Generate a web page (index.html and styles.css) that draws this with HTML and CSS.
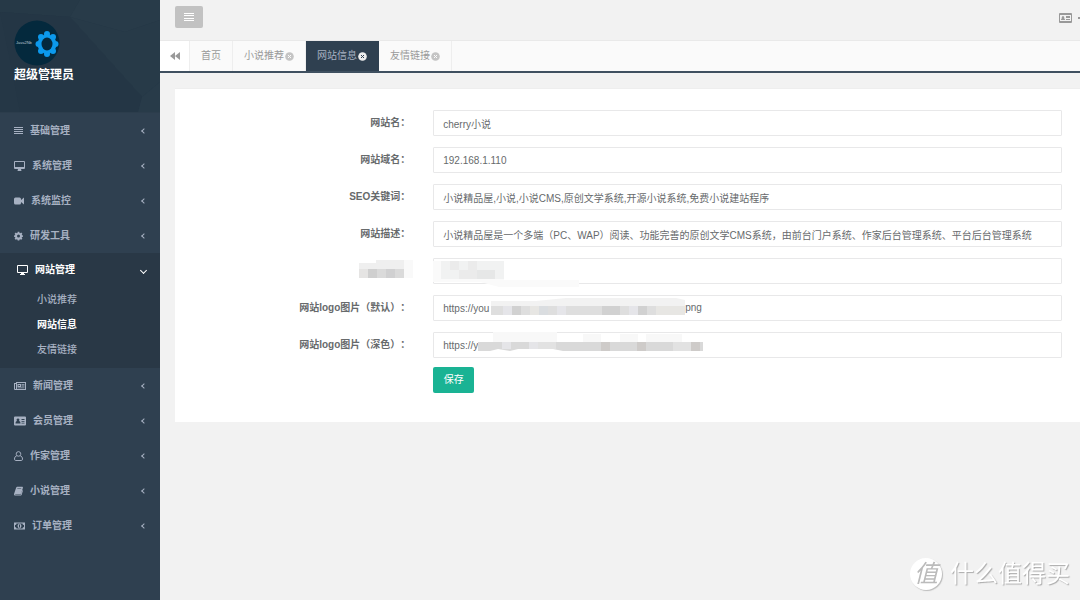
FILE: index.html
```html
<!DOCTYPE html>
<html lang="zh-CN">
<head>
<meta charset="utf-8">
<title>网站信息</title>
<link rel="stylesheet" href="styles.css">
</head>
<body>
<div class="layout">
  <nav class="sidebar">
    <header class="profile">
      <svg class="profile-pattern" viewBox="0 0 160 112" preserveAspectRatio="none" aria-hidden="true">
        <path d="M0 0H160V112H0Z" fill="#253746"/>
        <path d="M0 0H80L70 17L0 12Z" fill="#263947"/>
        <path d="M80 0H160V20L125 32L70 17Z" fill="#283b49"/>
        <path d="M70 17L125 32L160 20V82L142 97Z" fill="#273a48"/>
        <path d="M0 12L70 17L142 97L138 112H20L10 60Z" fill="#243645"/>
        <path d="M142 97L160 82V112H138Z" fill="#283b49"/>
      </svg>
      <svg class="avatar" viewBox="0 0 46 46" role="img" aria-label="头像">
        <circle cx="23" cy="23" r="22.500" fill="#04293d"/>
        <text x="2" y="24" class="avatar-text">Java2Nb</text>
        <g fill="#0c99ec">
          <circle cx="33" cy="24" r="9.500"/>
          <circle cx="33" cy="14" r="3"/><circle cx="39" cy="17" r="3"/><circle cx="41.500" cy="24" r="3"/><circle cx="39" cy="31" r="3"/>
          <circle cx="33" cy="34" r="3"/><circle cx="27" cy="31" r="3"/><circle cx="24.500" cy="24" r="3"/><circle cx="27" cy="17" r="3"/>
        </g>
        <ellipse cx="33" cy="24" rx="5.500" ry="6.500" fill="#04293d"/>
      </svg>
      <strong class="profile-name">超级管理员</strong>
    </header>
    <ul class="menu">
      <li><a class="menu-link" href="#"><svg width="9" height="10" viewBox="0 0 9 10"><path d="M0 1h9v1H0zM0 3h9v1H0zM0 5h9v1H0zM0 7h9v1H0z"/></svg>基础管理<i class="arrow"></i></a></li>
      <li><a class="menu-link" href="#"><svg width="11" height="10" viewBox="0 0 11 10"><path fill-rule="evenodd" d="M1 0h9a1 1 0 0 1 1 1v6a1 1 0 0 1-1 1H7l.5 2h-4L4 8H1a1 1 0 0 1-1-1V1a1 1 0 0 1 1-1zm0 1v5h9V1z"/></svg>系统管理<i class="arrow"></i></a></li>
      <li><a class="menu-link" href="#"><svg width="10" height="10" viewBox="0 0 10 10"><path d="M1.500 1.500h4A1.500 1.500 0 0 1 7 3v1l3-2.500v7L7 6v1a1.500 1.500 0 0 1-1.500 1.500h-4A1.500 1.500 0 0 1 0 7V3a1.500 1.500 0 0 1 1.500-1.500z"/></svg>系统监控<i class="arrow"></i></a></li>
      <li><a class="menu-link" href="#"><svg width="9" height="10" viewBox="0 0 9 10"><path fill-rule="evenodd" d="M3.700.7h1.600l.3 1.200.6.300 1-.7 1.200 1.200-.7 1 .3.600 1 .2v1.300l-1 .2-.3.700.7 1-1.200 1.100-1-.6-.6.200-.3 1.200H3.700l-.3-1.200-.6-.2-1 .6L.6 7.700l.7-1-.3-.7-1-.2V4.500l1-.2.300-.6-.7-1L1.800 1.500l1 .7.600-.3zM4.500 3.500a1.500 1.500 0 1 0 0 3 1.500 1.500 0 0 0 0-3z"/></svg>研发工具<i class="arrow"></i></a></li>
      <li class="menu-group">
        <a class="menu-link" href="#"><svg width="11" height="10" viewBox="0 0 11 10"><path fill-rule="evenodd" d="M1 0h9a1 1 0 0 1 1 1v6a1 1 0 0 1-1 1H7v1h1v1H3V9h1V8H1a1 1 0 0 1-1-1V1a1 1 0 0 1 1-1zm0 1v6h9V1z"/></svg>网站管理<i class="arrow arrow-down"></i></a>
        <ul class="submenu">
          <li><a href="#">小说推荐</a></li>
          <li><a class="current" href="#">网站信息</a></li>
          <li><a href="#">友情链接</a></li>
        </ul>
      </li>
      <li><a class="menu-link" href="#"><svg width="12" height="10" viewBox="0 0 12 10"><path fill-rule="evenodd" d="M2 1h10v8H1a1 1 0 0 1-1-1V2h2zM1 3v5h1V3zm2-1v6h8V2zM3.500 3H7v3H3.500zM4.500 4v1H6V4zM7.500 3h3v.8h-3zM7.500 4.600h3v.8h-3zM3.500 6.500h7v.8h-7z"/></svg>新闻管理<i class="arrow"></i></a></li>
      <li><a class="menu-link" href="#"><svg width="12" height="10" viewBox="0 0 12 10"><path fill-rule="evenodd" d="M1 .5h10a1 1 0 0 1 1 1v7a1 1 0 0 1-1 1H1a1 1 0 0 1-1-1v-7a1 1 0 0 1 1-1zM4 2.500a1.400 1.400 0 0 0-1 2.400C2 5.200 1.500 6 1.500 7.500h5C6.500 6 6 5.200 5 4.900a1.400 1.400 0 0 0-1-2.400zM7.500 3v1h3V3zm0 2v.8h3V5zm0 1.700v.8h3v-.8z"/></svg>会员管理<i class="arrow"></i></a></li>
      <li><a class="menu-link" href="#"><svg width="9" height="10" viewBox="0 0 9 10"><path class="line" d="M4.500.6a2.300 2.300 0 0 0-1.500 4C1.300 5 .5 6.500.5 8.200c0 .8.500 1.300 1.200 1.300h5.600c.7 0 1.200-.5 1.200-1.300C8.500 6.500 7.700 5 6 4.600a2.300 2.300 0 0 0-1.500-4zM3 4.600c1 .8 2 .8 3 0"/></svg>作家管理<i class="arrow"></i></a></li>
      <li><a class="menu-link" href="#"><svg width="9" height="10" viewBox="0 0 9 10"><path fill-rule="evenodd" d="M3 .8h5.500L9 1.500 7.200 7.600l-.7.400H1.400c-.5.200-.3.600.1.600h5.400L8.500 4 9 4.500 7.600 9l-.7.500H1.300C.3 9.500-.2 8.500.1 7.700L2.200 1.400zM3.400 2.400l-.2.700h3.900l.2-.7z"/></svg>小说管理<i class="arrow"></i></a></li>
      <li><a class="menu-link" href="#"><svg width="11" height="10" viewBox="0 0 11 10"><path fill-rule="evenodd" d="M0 1.500h11v7H0zM2.500 2.500A1.500 1.500 0 0 1 1 4v2a1.500 1.500 0 0 1 1.500 1.500h6A1.500 1.500 0 0 1 10 6V4a1.500 1.500 0 0 1-1.500-1.500zM5.500 2.800c1.200 0 1.900 1 1.900 2.200S6.700 7.200 5.500 7.200 3.600 6.200 3.600 5s.7-2.200 1.900-2.200zM5 3.600v2.800h1V3.600z"/></svg>订单管理<i class="arrow"></i></a></li>
    </ul>
  </nav>

  <main class="main">
    <div class="topbar">
      <button class="toggle" type="button" aria-label="折叠菜单"><svg width="10" height="10" viewBox="0 0 10 10"><path d="M0 1h10v1H0zM0 3h10v1H0zM0 6h10v1H0zM0 8h10v1H0z"/></svg></button>
      <a class="notice" href="#" aria-label="消息">
        <svg width="13" height="10" viewBox="0 0 13 10"><path fill-rule="evenodd" d="M1 0h11a1 1 0 0 1 1 1v8a1 1 0 0 1-1 1H1a1 1 0 0 1-1-1V1a1 1 0 0 1 1-1zm0 2v6h11V2z"/><path d="M2 7c0-1 .5-1.600 1-1.800a1.300 1.300 0 1 1 2 0C5.700 5.400 6 6 6 7zM7 3h4v2H7zM7 6h4v1H7z"/></svg>
        <i class="caret"></i>
      </a>
    </div>
    <div class="tabs">
      <button class="tabs-scroll" type="button" aria-label="向左"><svg width="10" height="8" viewBox="0 0 10 8"><path d="M5 0v8L0 4zM10 0v8L5 4z"/></svg></button>
      <a class="tab" href="#">首页</a>
      <a class="tab" href="#">小说推荐<svg width="9" height="9" viewBox="0 0 9 9"><circle cx="4.500" cy="4.500" r="4.300"/><path d="M3 3l3 3M6 3L3 6"/></svg></a>
      <a class="tab active" href="#">网站信息<svg width="9" height="9" viewBox="0 0 9 9"><circle cx="4.500" cy="4.500" r="4.300"/><path d="M3 3l3 3M6 3L3 6"/></svg></a>
      <a class="tab" href="#">友情链接<svg width="9" height="9" viewBox="0 0 9 9"><circle cx="4.500" cy="4.500" r="4.300"/><path d="M3 3l3 3M6 3L3 6"/></svg></a>
    </div>

    <form class="card">
      <div class="row"><label for="name">网站名：</label><div class="field"><input id="name" type="text" value="cherry小说"></div></div>
      <div class="row"><label for="domain">网站域名：</label><div class="field"><input id="domain" type="text" value="192.168.1.110"></div></div>
      <div class="row"><label for="seo">SEO关键词：</label><div class="field"><input id="seo" type="text" value="小说精品屋,小说,小说CMS,原创文学系统,开源小说系统,免费小说建站程序"></div></div>
      <div class="row"><label for="desc">网站描述：</label><div class="field"><input id="desc" type="text" value="小说精品屋是一个多端（PC、WAP）阅读、功能完善的原创文学CMS系统，由前台门户系统、作家后台管理系统、平台后台管理系统"></div></div>
      <div class="row">
        <label for="masked"><svg class="mask-label" width="51" height="18" viewBox="0 0 51 18" role="img" aria-label="已遮挡"><path fill="#efefef" d="M0 3h17V0h28v9H0z"/><path fill="#f9f9f9" d="M45 0h9v18h-9z"/><path fill="#e5e4e3" d="M0 9h9v9H0z"/><path fill="#cfcfcf" d="M9 9h9v9H9z"/><path fill="#dadada" d="M18 9h9v9h-9zM36 9h9v9h-9z"/><path fill="#d0d0d1" d="M27 9h9v9h-9z"/></svg></label>
        <div class="field"><input id="masked" type="text">
          <div class="mask mask-start"><svg width="146" height="26" viewBox="0 0 146 26" aria-hidden="true"><path fill="#fafafa" d="M0 3h71v21H0zM40 22h106v7H66z"/><path fill="#f1f2f2" d="M8 3h63v18H8z"/><path fill="#ebebeb" d="M17 3h9v9h-9zM35 3h9v9h-9zM26 12h18v9H26z"/><path fill="#e6e7e7" d="M44 12h18v9H44z"/></svg></div>
        </div>
      </div>
      <div class="row"><label for="logo">网站logo图片（默认）：</label><div class="field"><input id="logo" type="text" value="https://you">
        <div class="mask"><svg width="194" height="20" viewBox="0 0 194 20" aria-hidden="true"><path fill="#f2f2f2" d="M0 5h45L75 2h110l9 2v8H0z"/><path fill="#dedede" d="M0 10h194v9H0z"/><path fill="#e5e5e9" d="M12 10h9v9h-9zM66 10h9v9h-9zM138 10h9v9h-9z"/><path fill="#d1d1d1" d="M21 10h9v9h-9zM111 10h18v9h-18zM147 10h9v9h-9z"/><path fill="#dadde0" d="M48 10h9v9h-9z"/><path fill="#e7e6e3" d="M39 10h9v9h-9zM165 10h29v9h-29z"/></svg><span>png</span></div>
      </div></div>
      <div class="row"><label for="logo-dark">网站logo图片（深色）：</label><div class="field"><input id="logo-dark" type="text" value="https://y">
        <div class="mask mask-dark"><svg width="225" height="20" viewBox="0 0 225 20" aria-hidden="true"><path fill="#f8f8f8" d="M15 0h64v10H15zM105 2h18v8h-18zM142 2h18v8h-18zM168 2h36v8h-36z"/><path fill="#d9d9d9" d="M0 10h225v9H85l-10-2H40l-8 2-12-2-8 2H0z"/><path fill="#e5e5e8" d="M24 10h9v7h-9zM51 10h9v7h-9z"/><path fill="#cecbc9" d="M123 10h9v9h-9zM159 10h9v9h-9zM213 10h9v9h-9z"/><path fill="#e2e2e2" d="M60 10h18v7H60zM195 10h18v9h-18z"/></svg></div>
      </div></div>
      <div class="row actions"><button class="save" type="submit">保存</button></div>
    </form>
  </main>
</div>
<div class="watermark"><span class="watermark-badge">值</span><span>什么值得买</span></div>
</body>
</html>
```

FILE: styles.css
```css
* { box-sizing: border-box; }

body {
  margin: 0;
  background: #f2f2f2;
  color: #676a6c;
  font: 10px/16px "Liberation Sans", "Noto Sans CJK SC", sans-serif;
  text-spacing-trim: space-all;
}

a { color: inherit; text-decoration: none; }
ul { margin: 0; padding: 0; list-style: none; }
svg { flex: none; fill: currentColor; }
button, input { font: inherit; }

.layout { display: flex; min-height: 100vh; }

/* Sidebar */
.sidebar { flex: none; width: 160px; background: #2f4050; color: #a7b1c2; }

.profile {
  position: relative;
  display: flex;
  flex-direction: column;
  align-items: flex-start;
  height: 113px;
  padding: 20px 14px;
  border-bottom: 1px solid #2c3d4c;
}
.profile-pattern { position: absolute; inset: 0; width: 100%; height: 100%; }
.avatar { position: relative; width: 46px; height: 46px; }
.avatar-text { fill: #b9c6cf; font-size: 4px; }
.profile-name { position: relative; color: #fff; font-size: 12px; line-height: 18px; }

.menu-link {
  display: flex;
  align-items: center;
  gap: 7px;
  height: 35px;
  padding: 0 14px;
  font-weight: bold;
}
.line { fill: none; stroke: currentColor; }

.arrow {
  width: 4px;
  height: 4px;
  margin-left: auto;
  border: solid currentColor;
  border-width: 0 0 1px 1px;
  transform: rotate(45deg);
}
.arrow-down { width: 5px; height: 5px; transform: rotate(-45deg); }

.menu-group { padding-bottom: 6px; background: #293846; }
.menu-group .menu-link { height: 34px; padding-left: 17px; color: #fff; }
.submenu a { display: block; padding-left: 37px; line-height: 25px; font-weight: 500; }
.submenu .current { color: #fff; font-weight: bold; }

/* Header and tabs */
.main { flex: 1; min-width: 0; }

.topbar {
  display: flex;
  justify-content: space-between;
  align-items: flex-start;
  height: 41px;
  padding: 6px 0 0 15px;
  border-bottom: 1px solid #e9e9e9;
  overflow: hidden;
}
.toggle {
  display: flex;
  align-items: center;
  justify-content: center;
  width: 28px;
  height: 22px;
  padding: 0;
  border: 0;
  border-radius: 2px;
  background: #c2c2c2;
  color: #fff;
}
.notice { display: flex; align-items: center; gap: 6px; height: 24px; color: #999; }
.caret { width: 2px; height: 2px; background: #999; }

.tabs {
  display: flex;
  height: 32px;
  border-bottom: 2px solid #3f5060;
  background: #fafafa;
  color: #999;
}
.tabs-scroll {
  display: flex;
  align-items: center;
  justify-content: center;
  width: 30px;
  padding: 0;
  border: 0;
  border-right: 1px solid #eee;
  background: #fff;
  color: #999;
}
.tab {
  display: flex;
  align-items: center;
  gap: 1px;
  padding: 0 11px;
  border-right: 1px solid #eee;
}
.tab circle { fill: #c4c4c4; }
.tab path { stroke: #fafafa; }
.tab.active { border-color: #2f4050; background: #2f4050; color: #a7b1c2; }
.tab.active circle { fill: #eee; }
.tab.active path { stroke: #2f4050; }

/* Form */
.card {
  display: flex;
  flex-direction: column;
  gap: 11px;
  margin: 15px 0 0 15px;
  padding: 21px 18px 29px;
  border-top: 1px solid #eee;
  background: #fff;
}
.row { display: grid; grid-template-columns: 25% 1fr; column-gap: 23px; }
.row label { font-weight: bold; line-height: 26px; text-align: right; }
.mask-label { display: block; margin: 2px 0 0 auto; overflow: visible; }

.field { position: relative; display: flex; }
.field input {
  width: 100%;
  height: 26px;
  padding: 0 9px;
  border: 1px solid #e8e8e9;
  border-radius: 1px;
  outline: 0;
  background: #fff;
  color: #676a6c;
}
.mask { position: absolute; top: 1px; left: 58px; display: flex; line-height: 24px; }
.mask svg { overflow: visible; }
.mask-start { top: 0; left: 0; }
.mask-dark { top: 0; left: 45px; }

.actions { margin-top: -2px; }
.save {
  grid-column: 2;
  justify-self: start;
  width: 41px;
  height: 26px;
  padding: 0;
  border: 0;
  border-radius: 2px;
  background: #1ab394;
  color: #fff;
}

.watermark {
  position: fixed;
  right: 10px;
  bottom: 10px;
  display: flex;
  align-items: center;
  gap: 8px;
  color: #fff;
  font-size: 24px;
  line-height: 32px;
  text-shadow: 1px 1px 1px #aaa;
}
.watermark-badge {
  width: 32px;
  height: 32px;
  border-radius: 50%;
  background: #fff;
  box-shadow: 1px 1px 1px #bbb;
  color: #bbb;
  font-style: italic;
  text-align: center;
  text-shadow: none;
}
```
